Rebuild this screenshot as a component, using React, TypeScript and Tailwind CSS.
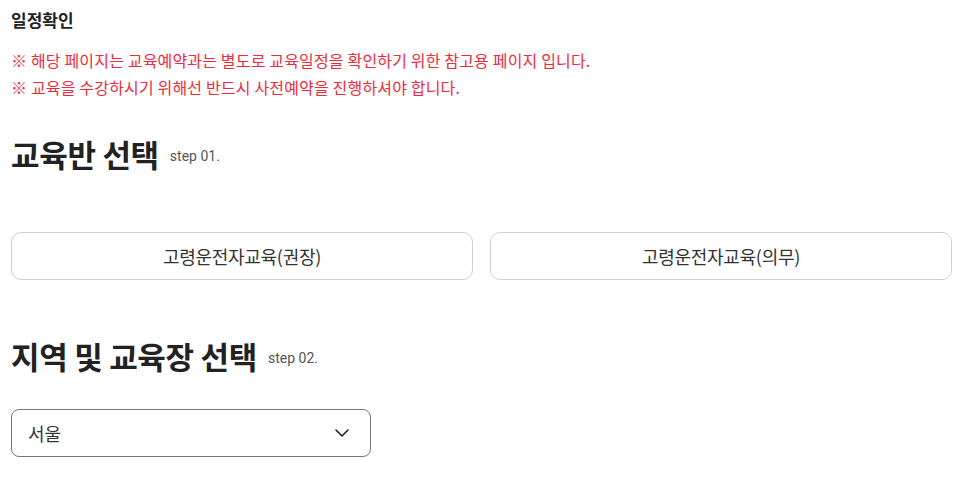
import React from "react";

const font = { fontFamily: '"Noto Sans CJK KR", "Noto Sans", sans-serif' };

function Heading({ title, step }: { title: string; step: string }) {
  return (
    <div className="flex items-end gap-[11px]">
      <h2 className="text-[31px] font-bold leading-[40px] text-[#222] tracking-[-0.3px]">{title}</h2>
      <span className="text-[14px] leading-[20px] text-[#555] pb-[8px]" style={{ fontFamily: 'Roboto, "Noto Sans CJK KR", sans-serif' }}>
        {step}
      </span>
    </div>
  );
}

export default function App() {
  return (
    <div className="w-[959px] h-[500px] bg-white px-[11px] overflow-hidden" style={font}>
      <div className="pt-[8px] text-[17px] font-bold leading-[24px] text-[#222]">일정확인</div>
      <div className="mt-[15px] text-[16px] leading-[27px] text-[#ee2b3b] tracking-[0.17px]">
        <p>※ 해당 페이지는 교육예약과는 별도로 교육일정을 확인하기 위한 참고용 페이지 입니다.</p>
        <p>※ 교육을 수강하시기 위해선 반드시 사전예약을 진행하셔야 합니다.</p>
      </div>
      <div className="mt-[33px]">
        <Heading title="교육반 선택" step="step 01." />
      </div>
      <div className="mt-[58px] grid grid-cols-2 gap-[17px] w-[941px]">
        <button className="h-[48px] rounded-[10px] border border-[#cfcfcf] bg-white text-[18px] text-[#333] tracking-[-0.3px]">
          고령운전자교육(권장)
        </button>
        <button className="h-[48px] rounded-[10px] border border-[#cfcfcf] bg-white text-[18px] text-[#333] tracking-[-0.3px]">
          고령운전자교육(의무)
        </button>
      </div>
      <div className="mt-[56px]">
        <Heading title="지역 및 교육장 선택" step="step 02." />
      </div>
      <div className="mt-[33px] w-[360px] h-[48px] rounded-[8px] border border-[#777] flex items-center justify-between pl-[16px] pr-[20px]">
        <span className="text-[18px] text-[#333]">서울</span>
        <svg width="16" height="10" viewBox="0 0 16 10" fill="none">
          <path d="M2 2l6 6 6-6" stroke="#222" strokeWidth="1.6" strokeLinecap="round" strokeLinejoin="round" />
        </svg>
      </div>
    </div>
  );
}
